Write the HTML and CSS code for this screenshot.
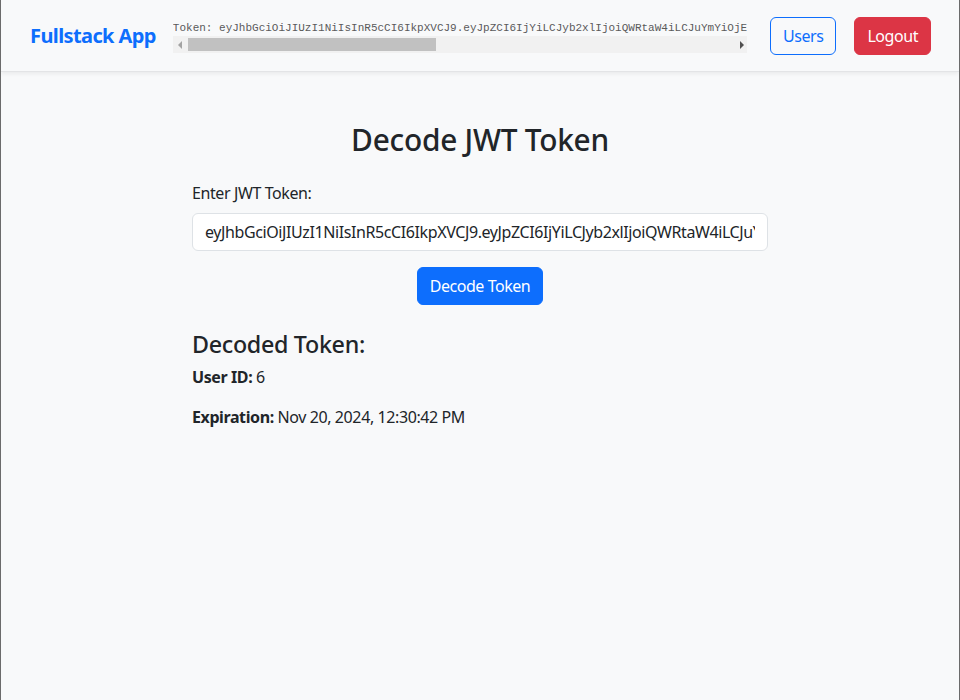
FILE: index.html
```html
<!DOCTYPE html>
<html lang="en">
<head>
<meta charset="utf-8">
<title>Fullstack App</title>
<link rel="stylesheet" href="styles.css">
</head>
<body>
<nav class="navbar">
  <a class="brand" href="#">Fullstack App</a>
  <div class="token-box">
    <div class="token-text">Token: eyJhbGciOiJIUzI1NiIsInR5cCI6IkpXVCJ9.eyJpZCI6IjYiLCJyb2xlIjoiQWRtaW4iLCJuYmYiOjE3MzIxMDIyNDIsImV4cCI6MTczMjEwNTg0MiwiaWF0IjoxNzMyMTAyMjQyfQ</div>
    <div class="scrollbar">
      <span class="arrow arrow-left"></span>
      <span class="track"><span class="thumb"></span></span>
      <span class="arrow arrow-right"></span>
    </div>
  </div>
  <div class="nav-actions">
    <button class="btn btn-outline">Users</button>
    <button class="btn btn-danger">Logout</button>
  </div>
</nav>
<main class="container">
  <h2 class="title">Decode JWT Token</h2>
  <label class="form-label" for="jwt">Enter JWT Token:</label>
  <input class="form-control" id="jwt" type="text" value="eyJhbGciOiJIUzI1NiIsInR5cCI6IkpXVCJ9.eyJpZCI6IjYiLCJyb2xlIjoiQWRtaW4iLCJuYmYiOjE3MzIxMDIyNDIsImV4cCI6MTczMjEwNTg0Mn0">
  <div class="center">
    <button class="btn btn-primary">Decode Token</button>
  </div>
  <h4 class="subtitle">Decoded Token:</h4>
  <p><strong>User ID:</strong> 6</p>
  <p><strong>Expiration:</strong> Nov 20, 2024, 12:30:42 PM</p>
</main>
</body>
</html>
```
FILE: styles.css
```css
* { box-sizing: border-box; }
html, body { height: 100%; }
body {
  margin: 0;
  background: #f8f9fa;
  color: #212529;
  font-family: "Noto Sans", "Open Sans", sans-serif;
  font-size: 16px;
  line-height: 1.5;
  letter-spacing: -0.4px;
  border-left: 1px solid #6b6b6b;
  border-right: 1px solid #6b6b6b;
}
.navbar {
  height: 72px;
  display: flex;
  align-items: center;
  padding: 0 28px 0 29px;
  background: #f8f9fa;
  border-bottom: 1px solid #e3e4e6;
  box-shadow: 0 2px 4px rgba(0,0,0,0.06);
}
.brand {
  font-size: 20px;
  font-weight: 700;
  letter-spacing: -0.6px;
  color: #0d6efd;
  text-decoration: none;
  white-space: nowrap;
  margin-right: 17px;
}
.token-box {
  width: 574px;
  display: flex;
  flex-direction: column;
  padding-top: 2px;
}
.token-text {
  font-family: "Liberation Mono", "DejaVu Sans Mono", monospace;
  font-size: 11px;
  line-height: 16px;
  letter-spacing: 0;
  color: #5a5a5a;
  white-space: nowrap;
  overflow: hidden;
}
.scrollbar {
  height: 17px;
  background: #f1f1f1;
  display: flex;
  align-items: center;
}
.arrow {
  width: 0; height: 0;
  border-top: 4px solid transparent;
  border-bottom: 4px solid transparent;
}
.arrow-left {
  border-right: 4px solid #a3a3a3;
  margin: 0 6px 0 5px;
}
.arrow-right {
  border-left: 4px solid #505050;
  margin: 0 3px 0 8px;
}
.track {
  flex: 1;
  height: 13px;
  display: flex;
}
.thumb {
  width: 248px;
  height: 13px;
  background: #c1c1c1;
}
.nav-actions {
  margin-left: auto;
  display: flex;
  gap: 18px;
}
.btn {
  font-family: inherit;
  font-size: 16px;
  line-height: 24px;
  letter-spacing: -0.45px;
  padding: 6px 12px;
  border-radius: 6px;
  border: 1px solid transparent;
  cursor: pointer;
}
.btn-outline {
  color: #0d6efd;
  border-color: #0d6efd;
  background: transparent;
}
.btn-danger {
  color: #fff;
  background: #dc3545;
  border-color: #dc3545;
}
.btn-primary {
  color: #fff;
  background: #0d6efd;
  border-color: #0d6efd;
}
.container {
  max-width: 600px;
  margin: 0 auto;
  padding: 50px 12px 0;
}
.title {
  font-size: 29.84px;
  font-weight: 500;
  letter-spacing: -0.25px;
  line-height: 1.2;
  text-align: center;
  margin: 0 0 23px;
}
.form-label {
  display: block;
  margin-bottom: 8px;
}
.form-control {
  display: block;
  width: 100%;
  font-family: inherit;
  font-size: 16px;
  line-height: 24px;
  letter-spacing: -0.4px;
  padding: 6px 12px;
  color: #212529;
  background: #fff;
  border: 1px solid #dee2e6;
  border-radius: 6px;
}
.center {
  text-align: center;
  margin-top: 16px;
}
.subtitle {
  font-size: 23.28px;
  font-weight: 500;
  letter-spacing: -0.3px;
  line-height: 1.2;
  margin: 26px 0 6px;
}
p { margin: 0 0 16px; }
strong { font-weight: 700; }
```
